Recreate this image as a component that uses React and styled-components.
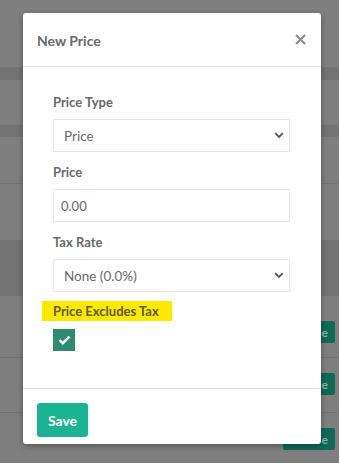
import React from "react";
import styled, { createGlobalStyle } from "styled-components";

const Global = createGlobalStyle`
  html, body { margin: 0; padding: 0; }
  body { width: 339px; height: 463px; overflow: hidden; font-family: Lato, "Open Sans", sans-serif; }
  * { box-sizing: border-box; }
`;

const Page = styled.div`
  position: relative;
  width: 339px;
  height: 463px;
  background: #7f7f7f;
  display: flex;
  flex-direction: column;
  overflow: hidden;
`;

const BgRow = styled.div`
  height: ${(p) => p.$h}px;
  flex: none;
  background: ${(p) => (p.$dark ? "#747474" : "#7f7f7f")};
  border-bottom: ${(p) => (p.$line ? "1px solid #727272" : "none")};
  display: flex;
  justify-content: flex-end;
  align-items: ${(p) => p.$align || "center"};
  padding-top: ${(p) => p.$pt || 0}px;
`;

const BgSplit = styled.div`
  display: flex;
  flex-direction: column;
  flex: 1;
  background: linear-gradient(to right, #7f7f7f 79px, #727272 79px, #727272 80px, #7f7f7f 80px);
`;

const BgButton = styled.div`
  width: 52px;
  height: 22px;
  margin-right: 4px;
  border-radius: 2px;
  background: #0f6a56;
  color: #8fb5ab;
  font-size: 12px;
  font-weight: 700;
  display: flex;
  align-items: center;
  justify-content: flex-end;
  padding-right: 7px;
`;

const Modal = styled.div`
  position: absolute;
  left: 23px;
  top: 13px;
  width: 298px;
  height: 431px;
  background: #fff;
  border-radius: 3px;
  box-shadow: 0 2px 6px rgba(0, 0, 0, 0.35);
  display: flex;
  flex-direction: column;
`;

const Header = styled.div`
  height: 54px;
  flex: none;
  border-bottom: 1px solid #e5e5e5;
  display: flex;
  align-items: center;
  justify-content: space-between;
  padding: 0 14px;
`;

const Title = styled.h4`
  margin: 0;
  font-size: 14px;
  font-weight: 700;
  color: #676a6c;
  padding-top: 2px;
`;

const Close = styled.button`
  border: 0;
  background: none;
  padding: 0;
  width: 14px;
  height: 14px;
  display: flex;
  align-items: center;
  justify-content: center;
  cursor: pointer;
`;

const Body = styled.div`
  flex: 1;
  padding: 26px 31px 0 30px;
  display: flex;
  flex-direction: column;
`;

const Group = styled.div`
  display: flex;
  flex-direction: column;
  margin-bottom: ${(p) => p.$mb ?? 11}px;
`;

const Label = styled.label`
  display: block;
  height: 18px;
  line-height: 18px;
  font-size: 13px;
  font-weight: 700;
  color: #676a6c;
  margin-bottom: 8px;
`;

const HighlightLabel = styled.span`
  align-self: flex-start;
  margin-left: -11px;
  padding: 0 13px 0 11px;
  height: 20px;
  line-height: 20px;
  font-size: 13px;
  font-weight: 700;
  background: #fde800;
  color: #5f5c14;
`;

const SelectWrap = styled.div`
  position: relative;
  height: 33px;
`;

const Select = styled.select`
  appearance: none;
  width: 100%;
  height: 33px;
  border: 1px solid #e5e6e7;
  border-radius: 1px;
  background: #fff;
  font-family: Lato, "Open Sans", sans-serif;
  font-size: 13.5px;
  color: #676a6c;
  padding: 0 30px 0 10px;
  outline: none;
`;

const Chevron = styled.svg`
  position: absolute;
  right: 6px;
  top: 13px;
  pointer-events: none;
`;

const Input = styled.input`
  width: 100%;
  height: 33px;
  border: 1px solid #e5e6e7;
  border-radius: 1px;
  font-family: Lato, "Open Sans", sans-serif;
  font-size: 13px;
  color: #676a6c;
  padding: 0 7px;
  outline: none;
`;

const Check = styled.span`
  margin-top: 8px;
  width: 22px;
  height: 22px;
  background: #2d8b74;
  display: flex;
  align-items: center;
  justify-content: center;
`;

const Footer = styled.div`
  height: 56px;
  flex: none;
  border-top: 1px solid #e5e5e5;
  padding: 14px 14px 0;
`;

const SaveButton = styled.button`
  height: 34px;
  width: 51px;
  border: 0;
  border-radius: 3px;
  background: #1ab394;
  color: #fff;
  font-family: Lato, "Open Sans", sans-serif;
  font-size: 14px;
  font-weight: 700;
  cursor: pointer;
`;

function ChevronIcon() {
  return (
    <Chevron width="10" height="7" viewBox="0 0 10 7">
      <path d="M1.2 1.2 L5 5 L8.8 1.2" fill="none" stroke="#555" strokeWidth="1.8" />
    </Chevron>
  );
}

export default function App() {
  return (
    <>
      <Global />
      <Page>
        <BgRow $h={67} />
        <BgRow $h={13} $dark />
        <BgRow $h={45} />
        <BgRow $h={12} $dark />
        <BgRow $h={47} $line />
        <BgRow $h={56} />
        <BgRow $h={56} $dark $line />
        <BgRow $h={62} $line $align="flex-start" $pt={25}>
          <BgButton>e</BgButton>
        </BgRow>
        <BgSplit>
          <BgRow $h={55} $line $align="flex-start" $pt={15}>
            <BgButton>e</BgButton>
          </BgRow>
          <BgRow $h={50} $align="flex-start" $pt={15}>
            <BgButton>e</BgButton>
          </BgRow>
        </BgSplit>

        <Modal>
          <Header>
            <Title>New Price</Title>
            <Close aria-label="close">
              <svg width="11" height="11" viewBox="0 0 11 11">
                <path d="M1 1 L10 10 M10 1 L1 10" stroke="#8a8a8a" strokeWidth="2.1" />
              </svg>
            </Close>
          </Header>
          <Body>
            <Group>
              <Label>Price Type</Label>
              <SelectWrap>
                <Select defaultValue="price">
                  <option value="price">Price</option>
                </Select>
                <ChevronIcon />
              </SelectWrap>
            </Group>
            <Group>
              <Label>Price</Label>
              <Input defaultValue="0.00" />
            </Group>
            <Group $mb={9}>
              <Label>Tax Rate</Label>
              <SelectWrap>
                <Select defaultValue="none">
                  <option value="none">None (0.0%)</option>
                </Select>
                <ChevronIcon />
              </SelectWrap>
            </Group>
            <Group $mb={0}>
              <HighlightLabel>Price Excludes Tax</HighlightLabel>
              <Check>
                <svg width="13" height="10" viewBox="0 0 13 10">
                  <path d="M1.5 5 L4.8 8.2 L11.5 1.6" fill="none" stroke="#fff" strokeWidth="2.4" />
                </svg>
              </Check>
            </Group>
          </Body>
          <Footer>
            <SaveButton>Save</SaveButton>
          </Footer>
        </Modal>
      </Page>
    </>
  );
}
